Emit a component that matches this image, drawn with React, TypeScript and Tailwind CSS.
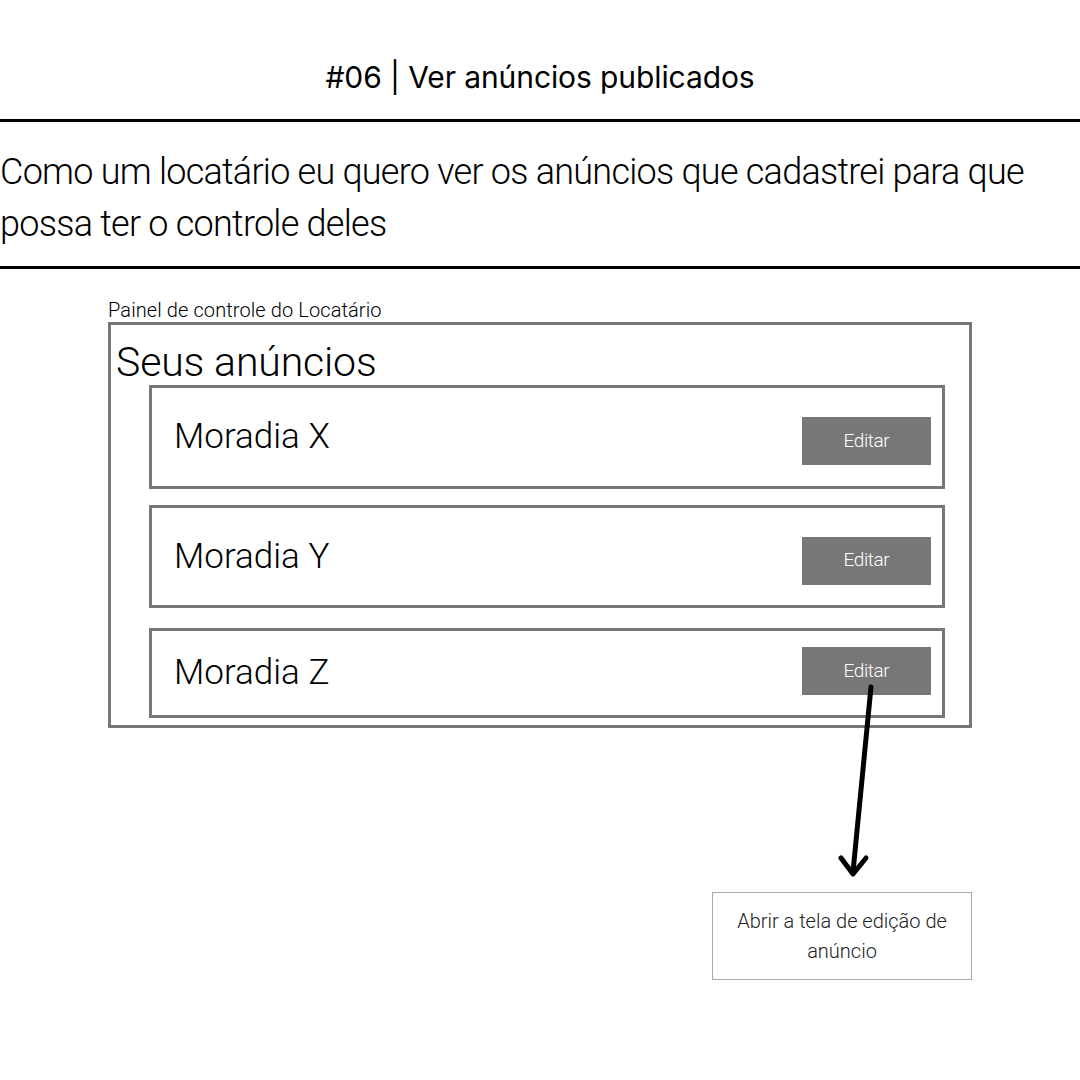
const listings = [
  { name: "Moradia X", h: "h-[104px]", mt: "mt-0", btn: "mt-[8px]" },
  { name: "Moradia Y", h: "h-[103px]", mt: "mt-[16px]", btn: "mt-[8px]" },
  { name: "Moradia Z", h: "h-[90px]", mt: "mt-[20px]", btn: "mt-[-4px]" },
];

export default function App() {
  return (
    <div className="relative w-[1080px] h-[1080px] bg-white overflow-hidden text-black font-['Roboto',sans-serif]">
      {/* header */}
      <div className="pt-[58px] h-[119px]">
        <h1 className="text-center text-[30px] leading-[38px] font-['Inter',sans-serif] font-normal tracking-[-0.1px]">
          #06 | Ver anúncios publicados
        </h1>
      </div>
      <div className="h-[3px] bg-black" />

      {/* user story */}
      <p className="pt-[24px] pb-[16px] text-[36px] leading-[52px] font-light tracking-[-0.75px]">
        Como um locatário eu quero ver os anúncios que cadastrei para que
        <br />
        possa ter o controle deles
      </p>
      <div className="h-[3px] bg-black" />

      {/* wireframe */}
      <div className="ml-[108px] mt-[30px]">
        <div className="text-[20px] leading-[22px] font-light tracking-[0.1px] h-[23px]">
          Painel de controle do Locatário
        </div>
        <div className="w-[864px] h-[406px] border-[3px] border-[#777]">
          <div className="h-[60px] pl-[5px] pt-[13px] text-[41px] leading-[48px] font-light tracking-[-0.15px]">
            Seus anúncios
          </div>
          <div className="ml-[38px] w-[796px] flex flex-col">
            {listings.map((l) => (
              <div
                key={l.name}
                className={`${l.h} ${l.mt} border-[3px] border-[#777] flex items-center justify-between pl-[22px] pr-[11px]`}
              >
                <span className="text-[35px] leading-[40px] font-light tracking-[0px]">{l.name}</span>
                <div className={`w-[129px] h-[48px] ${l.btn} bg-[#777] flex items-center justify-center text-white text-[19px] font-light tracking-[-0.4px]`}>
                  Editar
                </div>
              </div>
            ))}
          </div>
        </div>
      </div>

      {/* result box */}
      <div className="ml-[712px] mt-[164px] w-[260px] h-[88px] border border-[#aaa] flex items-center justify-center text-center text-[20px] leading-[30px] font-light tracking-[0px] text-[#222]">
        Abrir a tela de edição de
        <br />
        anúncio
      </div>

      {/* arrow */}
      <svg className="absolute left-0 top-0 pointer-events-none" width="1080" height="1080">
        <path d="M871 687 L853 872" stroke="black" strokeWidth="5" strokeLinecap="round" fill="none" />
        <path d="M841 858 L853 874 L866 858" stroke="black" strokeWidth="5" strokeLinecap="round" strokeLinejoin="round" fill="none" />
      </svg>
    </div>
  );
}
